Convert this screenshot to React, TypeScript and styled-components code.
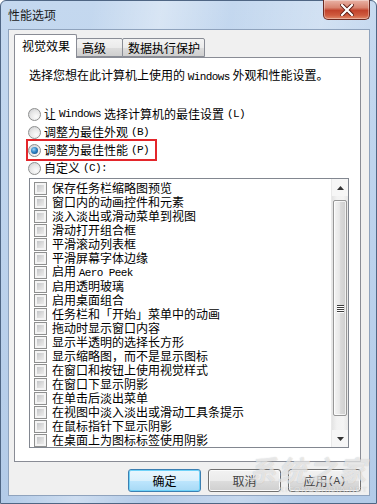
import React from 'react';
import styled, { createGlobalStyle } from 'styled-components';

const Global = createGlobalStyle`
  html, body { margin: 0; padding: 0; }
  body {
    width: 377px; height: 504px; overflow: hidden; background: #fff;
    font-family: "Noto Sans CJK SC", "Liberation Sans", sans-serif;
    font-size: 12px; color: #000;
  }
  * { box-sizing: border-box; }
`;

const Window = styled.div`
  position: relative;
  width: 377px;
  height: 504px;
  border: 1px solid #4f6684;
  border-radius: 6px 6px 0 0;
  background:
    linear-gradient(100deg, rgba(255,255,255,0) 20%, rgba(255,255,255,0.35) 35%, rgba(255,255,255,0) 50%, rgba(255,255,255,0.25) 70%, rgba(255,255,255,0) 85%),
    linear-gradient(180deg, #c4d8ef 0%, #bcd2ec 50%, #b3cbe8 100%);
  display: flex;
  flex-direction: column;
  padding: 0 6px 7px 7px;
`;

const TitleBar = styled.div`
  height: 28px;
  display: flex;
  align-items: flex-start;
  justify-content: space-between;
`;

const Title = styled.div`
  padding-top: 7px;
  line-height: 14px;
  font-size: 12px;
  color: #1a1a1a;
`;

const CloseBtn = styled.div`
  width: 47px;
  height: 20px;
  margin-top: -1px;
  border: 1px solid #6b2a22;
  border-top: none;
  border-radius: 0 0 5px 5px;
  background: linear-gradient(180deg, #e9b3a6 0%, #d88470 40%, #c2432c 55%, #cf5a3e 80%, #e0896a 100%);
  box-shadow: inset 0 0 0 1px rgba(255,255,255,0.35);
  display: flex;
  align-items: center;
  justify-content: center;
`;

const Client = styled.div`
  flex: 1;
  background: #f0f0f0;
  border: 1px solid #8fa3bd;
  display: flex;
  flex-direction: column;
  padding: 4px 8px 0 5px;
`;

const TabStrip = styled.div`
  display: flex;
  align-items: flex-end;
  height: 23px;
`;

const Tab = styled.div<{ $active?: boolean; $w: number }>`
  position: relative;
  width: ${p => p.$w}px;
  height: ${p => (p.$active ? 24 : 19)}px;
  margin-bottom: ${p => (p.$active ? -1 : 0)}px;
  margin-left: ${p => (p.$active ? 0 : -1)}px;
  z-index: ${p => (p.$active ? 2 : 1)};
  border: 1px solid #898c95;
  border-bottom: ${p => (p.$active ? 'none' : '1px solid #898c95')};
  border-radius: 2px 2px 0 0;
  background: ${p =>
    p.$active
      ? '#ffffff'
      : 'linear-gradient(180deg, #f3f3f3 0%, #ebebeb 50%, #dddddd 51%, #cfcfcf 100%)'};
  padding: ${p => (p.$active ? '4px 0 0 7px' : '2px 0 0 5px')};
  line-height: 14px;
  white-space: nowrap;
`;

const Panel = styled.div`
  background: #fff;
  border: 1px solid #898c95;
  padding: 10px 11px 13px 14px;
  display: flex;
  flex-direction: column;
`;

const Desc = styled.div`
  height: 14px;
  line-height: 14px;
  white-space: nowrap;
  margin-bottom: 23px;
`;

const Lat = styled.span`
  font-family: "Liberation Mono", monospace;
  font-size: 11px;
  letter-spacing: -0.6px;
`;

const RadioRow = styled.div<{ $marked?: boolean }>`
  align-self: flex-start;
  height: 18px;
  margin-left: -1px;
  display: inline-flex;
  align-items: center;
  gap: 3px;
  padding-right: ${p => (p.$marked ? 6 : 0)}px;
  outline: ${p => (p.$marked ? '2px solid #e3262b' : 'none')};
  outline-offset: 0px;
  line-height: 14px;
  white-space: nowrap;
`;

const Radio = styled.span<{ $on?: boolean }>`
  position: relative;
  width: 13px;
  height: 13px;
  border-radius: 50%;
  border: 1px solid #8e8f8f;
  background: radial-gradient(circle at 65% 70%, #fbfbfb 0%, #e8e8e8 50%, #c6c8cb 100%);
  flex: none;
  &::after {
    content: '';
    display: ${p => (p.$on ? 'block' : 'none')};
    position: absolute;
    left: 2px; top: 2px;
    width: 7px; height: 7px;
    border-radius: 50%;
    background: radial-gradient(circle at 40% 35%, #9fd5f7 0%, #2e84c6 45%, #0b3f75 100%);
  }
`;

const ListBox = styled.div`
  margin-top: 1px;
  height: 270px;
  border: 1px solid #828790;
  background: #fff;
  display: flex;
`;

const Items = styled.div`
  flex: 1;
  overflow: hidden;
  padding: 2px 0 0 4px;
`;

const CheckRow = styled.div`
  height: 14px;
  display: flex;
  align-items: center;
  gap: 5px;
  line-height: 14px;
  white-space: nowrap;
`;

const Check = styled.span`
  width: 13px;
  height: 13px;
  flex: none;
  border: 1px solid #8e8f8f;
  background: #f4f4f4;
  padding: 2px;
  &::before {
    content: '';
    display: block;
    width: 100%;
    height: 100%;
    background: linear-gradient(135deg, #c3c5c8 0%, #dedede 60%, #ebebeb 100%);
  }
`;

const ScrollBar = styled.div`
  width: 17px;
  flex: none;
  display: flex;
  flex-direction: column;
  background: linear-gradient(90deg, #e4e4e4 0%, #f2f2f2 30%, #f4f4f4 70%, #e8e8e8 100%);
  border-left: 1px solid #e9e9e9;
`;

const Arrow = styled.div`
  height: 17px;
  flex: none;
  display: flex;
  align-items: center;
  justify-content: center;
  background: #f6f6f6;
`;

const Track = styled.div`
  flex: 1;
  padding: 4px 1px 0 1px;
`;

const Thumb = styled.div`
  height: 216px;
  border: 1px solid #979797;
  border-radius: 2px;
  background: linear-gradient(90deg, #f4f4f4 0%, #e8e8e8 45%, #d9d9d9 55%, #cfcfcf 100%);
  box-shadow: inset 0 0 0 1px rgba(255,255,255,0.7);
  display: flex;
  align-items: center;
  justify-content: center;
`;

const Grip = styled.div`
  width: 7px;
  display: flex;
  flex-direction: column;
  gap: 1px;
  & > span {
    display: block;
    height: 1px;
    background: #3d3d3d;
    box-shadow: 0 1px 0 #fff;
  }
`;

const ButtonRow = styled.div`
  display: flex;
  justify-content: flex-end;
  gap: 7px;
  margin-top: 7px;
`;

const Button = styled.div<{ $default?: boolean }>`
  width: 73px;
  height: 23px;
  border-radius: 3px;
  border: 1px solid ${p => (p.$default ? '#3c7fb1' : '#707070')};
  background: ${p =>
    p.$default
      ? 'linear-gradient(180deg, #eaf6fd 0%, #d9f0fc 50%, #bee6fd 51%, #a7d9f5 100%)'
      : 'linear-gradient(180deg, #f2f2f2 0%, #ebebeb 50%, #dddddd 51%, #cfcfcf 100%)'};
  box-shadow: ${p => (p.$default ? 'inset 0 0 0 1px #6fd2f8' : 'inset 0 0 0 1px #fbfbfb')};
  display: flex;
  align-items: center;
  justify-content: center;
  line-height: 14px;
  color: ${p => (p.$default ? '#000' : '#444')};
`;

const Watermark = styled.div`
  position: absolute;
  right: 8px;
  bottom: 4px;
  width: 140px;
  height: 46px;
  pointer-events: none;
  display: flex;
  flex-direction: column;
  align-items: flex-end;
  color: rgba(255, 255, 255, 0.62);
`;

const WmBig = styled.div`
  font-family: "Noto Sans CJK SC", sans-serif;
  font-size: 28px;
  font-weight: 700;
  font-style: italic;
  line-height: 32px;
  letter-spacing: 2px;
  text-shadow: 0 0 1px rgba(120,120,120,0.45);
`;

const WmSmall = styled.div`
  font-family: "Liberation Sans", sans-serif;
  font-size: 8px;
  letter-spacing: 1px;
  line-height: 10px;
  text-shadow: 0 0 1px rgba(120,120,120,0.45);
`;

const items: React.ReactNode[] = [
  '保存任务栏缩略图预览',
  '窗口内的动画控件和元素',
  '淡入淡出或滑动菜单到视图',
  '滑动打开组合框',
  '平滑滚动列表框',
  '平滑屏幕字体边缘',
  <>启用 <Lat>Aero Peek</Lat></>,
  '启用透明玻璃',
  '启用桌面组合',
  '任务栏和「开始」菜单中的动画',
  '拖动时显示窗口内容',
  '显示半透明的选择长方形',
  '显示缩略图，而不是显示图标',
  '在窗口和按钮上使用视觉样式',
  '在窗口下显示阴影',
  '在单击后淡出菜单',
  '在视图中淡入淡出或滑动工具条提示',
  '在鼠标指针下显示阴影',
  '在桌面上为图标标签使用阴影',
];

export default function App() {
  return (
    <>
      <Global />
      <Window>
        <TitleBar>
          <Title>性能选项</Title>
          <CloseBtn>
            <svg width="14" height="12" viewBox="0 0 14 12">
              <path d="M2 1 L12 11 M12 1 L2 11" stroke="#5a1a12" strokeWidth="4" strokeLinecap="square" />
              <path d="M2 1 L12 11 M12 1 L2 11" stroke="#ffffff" strokeWidth="2.2" strokeLinecap="square" />
            </svg>
          </CloseBtn>
        </TitleBar>
        <Client>
          <TabStrip>
            <Tab $active $w={63}>视觉效果</Tab>
            <Tab $w={47}>高级</Tab>
            <Tab $w={83}>数据执行保护</Tab>
          </TabStrip>
          <Panel>
            <Desc>选择您想在此计算机上使用的 <Lat>Windows</Lat> 外观和性能设置。</Desc>
            <RadioRow><Radio />让 <Lat>Windows</Lat> 选择计算机的最佳设置<Lat>(L)</Lat></RadioRow>
            <RadioRow><Radio />调整为最佳外观<Lat>(B)</Lat></RadioRow>
            <RadioRow $marked><Radio $on />调整为最佳性能<Lat>(P)</Lat></RadioRow>
            <RadioRow><Radio />自定义<Lat>(C):</Lat></RadioRow>
            <ListBox>
              <Items>
                {items.map((t, i) => (
                  <CheckRow key={i}><Check /><span>{t}</span></CheckRow>
                ))}
              </Items>
              <ScrollBar>
                <Arrow>
                  <svg width="7" height="4" viewBox="0 0 7 4"><path d="M0 4 L3.5 0 L7 4 Z" fill="#333" /></svg>
                </Arrow>
                <Track>
                  <Thumb>
                    <Grip><span /><span /><span /><span /></Grip>
                  </Thumb>
                </Track>
                <Arrow>
                  <svg width="7" height="4" viewBox="0 0 7 4"><path d="M0 0 L7 0 L3.5 4 Z" fill="#333" /></svg>
                </Arrow>
              </ScrollBar>
            </ListBox>
          </Panel>
          <ButtonRow>
            <Button $default>确定</Button>
            <Button>取消</Button>
            <Button>应用<Lat>(A)</Lat></Button>
          </ButtonRow>
        </Client>
        <Watermark>
          <WmBig>系统之家</WmBig>
          <WmSmall>XITONGZHIJIA.NET</WmSmall>
        </Watermark>
      </Window>
    </>
  );
}
